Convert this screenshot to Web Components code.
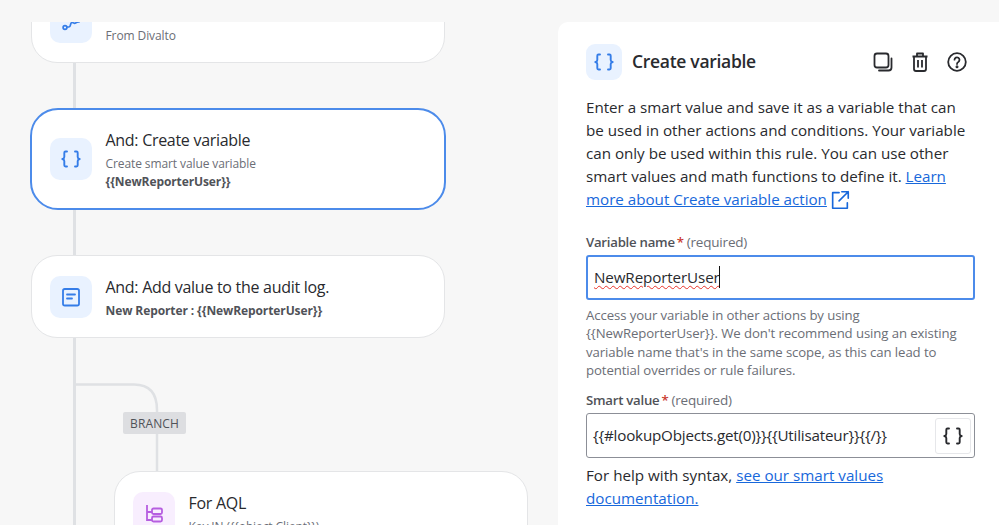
<!DOCTYPE html>
<html><head><meta charset="utf-8"><style>
html,body{margin:0;padding:0;width:999px;height:525px;overflow:hidden;background:#f7f8f9;font-family:"Open Sans","Noto Sans",sans-serif}
</style></head><body>
<rule-page>
  <rule-canvas slot="canvas">
    <flow-card style="--top:-42px;--h:83px;--pt:24px" tone="blue" desc="From Divalto" icon="branchy"></flow-card>
    <flow-card style="--top:45px;--h:102px;--mx:30px;--w:416px" selected heading="And: Create variable" desc="Create smart value variable" strong="{{NewReporterUser}}" tone="blue" icon="braces"></flow-card>
    <flow-card style="--top:45px;--h:83px" heading="And: Add value to the audit log." strong="New Reporter : {{NewReporterUser}}" tone="blue" icon="log"></flow-card>
    <flow-card style="--top:133px;--h:83px;--mx:114px" heading="For AQL" desc="Key IN ({{object.Client}})" tone="purple" icon="tree"></flow-card>
    <branch-tag>BRANCH</branch-tag>
  </rule-canvas>
  <config-panel slot="panel"></config-panel>
</rule-page>
<script>
const ICONS={
 braces:'<path d="M8 4.500H6.500c-.8 0-1.200.4-1.200 1.200V10c0 1-.6 1.700-2 2 1.400.3 2 1 2 2v4.300c0 .8.4 1.200 1.200 1.200H8M16 4.500h1.500c.8 0 1.200.4 1.200 1.200V10c0 1 .6 1.700 2 2-1.400.3-2 1-2 2v4.300c0 .8-.4 1.200-1.200 1.200H16" fill="none" stroke="currentColor" stroke-width="1.900" stroke-linecap="round" stroke-linejoin="round"/>',
 log:'<rect x="4" y="4" width="16" height="16.500" rx="1.800" fill="none" stroke="currentColor" stroke-width="1.800"/><path d="M8 9.500h8M8 13.500h5" stroke="currentColor" stroke-width="1.800" stroke-linecap="round"/>',
 tree:'<path d="M5 4v15h5M5 11h5" fill="none" stroke="currentColor" stroke-width="1.800"/><rect x="10" y="7.500" width="10" height="5.500" rx="1.500" fill="none" stroke="currentColor" stroke-width="1.800"/><rect x="10" y="15.500" width="10" height="5" rx="1.500" fill="none" stroke="currentColor" stroke-width="1.800"/>',
 branchy:'<circle cx="6" cy="17.500" r="1.900" fill="none" stroke="currentColor" stroke-width="1.700"/><path d="M8 17h2c2 0 1-4.500 3-4.500s2 1.500 3.500 .5 1.500-1 3.500-1" fill="none" stroke="currentColor" stroke-width="1.700" stroke-linecap="round"/>'
};
function def(name,css,html){customElements.define(name,class extends HTMLElement{connectedCallback(){if(this.shadowRoot)return;const s=this.attachShadow({mode:'open'});s.innerHTML='<style>'+css+'</style>'+(typeof html==='function'?html(this):html);}});}
def('rule-page',`:host{display:grid;grid-template-columns:558px 441px;padding-top:22px;height:503px;background:#f7f7f7}`,`<slot name="canvas"></slot><slot name="panel"></slot>`);
def('rule-canvas',`:host{display:flex;flex-direction:column;align-items:flex-start;height:503px;overflow:hidden;position:relative}
svg{position:absolute;left:0;top:0}`,`<svg width="558" height="503" fill="none" stroke="#dfe1e4"><path d="M74.500 30V503" stroke-width="3"/><path d="M76 362.500H134Q157 362.500 157 388V450" stroke-width="2.500"/></svg><slot></slot>`);
def('flow-card',`:host{display:flex;box-sizing:border-box;position:relative;width:var(--w,414px);height:var(--h);margin:var(--top) 0 0 var(--mx,31px);flex:none;background:#fff;border:1px solid #e4e5e7;border-radius:26px;align-items:center;padding-left:18px;gap:14px;color:#292a2e}
:host([selected]){border:2px solid #4c8bea;padding-left:18px;border-radius:28px}
.tile{width:42px;height:42px;border-radius:10px;flex:none;display:flex;align-items:center;justify-content:center}
.blue{background:#e9f2ff;color:#357de8}.purple{background:#f8eefe;color:#b65ee0}
svg{width:24px;height:24px;display:block}
.txt{padding-top:var(--pt,2px);margin-left:-.5px}
.h{font-size:16px;line-height:22px;letter-spacing:-.29px}
.d{font-size:12px;line-height:18px;color:#6b6e76;letter-spacing:-.1px}
.d.first{margin-top:4px}
b{display:block;font-size:12px;line-height:18px;color:#505258;font-weight:700;letter-spacing:-.1px}`,
el=>{const g=a=>el.getAttribute(a);return `<div class="tile ${g('tone')}"><svg viewBox="0 0 24 24">${ICONS[g('icon')]}</svg></div><div class="txt">${g('heading')?`<div class="h">${g('heading')}</div>`:''}${g('desc')?`<div class="d first">${g('desc')}</div>`:''}${g('strong')?`<b${g('desc')?'':' style="margin-top:4px"'}>${g('strong')}</b>`:''}</div>`});
def('branch-tag',`:host{position:absolute;left:123px;top:390px;width:63px;height:22px;background:#dddee1;border-radius:2px;color:#505258;font-size:12px;letter-spacing:.1px;display:flex;align-items:center;justify-content:center}`,`<slot></slot>`);
def('config-panel',`:host{display:block;box-sizing:border-box;height:503px;background:#fff;border-radius:10px 0 0 0;padding:21px 24px 0 28px;color:#292a2e;overflow:hidden;font-size:15.200px}
header{display:flex;align-items:center;height:37px}
.tile{width:36px;height:36px;border-radius:9px;background:#e9f2ff;color:#357de8;display:flex;align-items:center;justify-content:center;flex:none}
.tile svg{width:24px;height:24px}
h2{margin:-2px 0 0 10px;font-size:17.500px;font-weight:600;flex:1;letter-spacing:-.3px}
.acts{display:flex;gap:13px;margin-right:6px;color:#292a2e}
.acts svg{width:24px;height:24px;display:block}
p{margin:0;line-height:23px}
.intro{margin-top:16px;letter-spacing:-.02px}
a{color:#1868db;text-decoration:underline}
a svg{width:22px;height:22px;vertical-align:0;margin:-6px 0 -6px -2px}
label{display:block;font-size:13.200px;line-height:18px;font-weight:600;color:#505258;letter-spacing:-.25px}
label i{color:#c9372c;font-style:normal;margin-left:2px}
label span{font-size:13.500px;font-weight:400;color:#6b6e76;margin-left:3px;letter-spacing:-.2px}
.field{box-sizing:border-box;width:389px;height:45px;border-radius:3px;display:flex;align-items:center;font-size:15.200px;position:relative}
.f1{border:2px solid #4c8bea;padding:0 0 2px 6px;margin-top:4px}
.f2{border:1px solid #8c8f97;padding:0 3px 2px 6px;justify-content:space-between;margin-top:4px}
.sq{text-decoration:underline wavy #e8332a 1.300px;text-underline-offset:2px;letter-spacing:-.12px}
.caret{width:1.500px;height:22px;background:#111;margin-left:-1px}
.v{letter-spacing:-.2px}
.btn{width:36px;height:36px;box-sizing:border-box;border:1px solid #e6e7ea;border-radius:3px;display:flex;align-items:center;justify-content:center;color:#292a2e;background:#fff;margin-bottom:-2px}
.btn svg{width:24px;height:24px}
.help{margin-top:6px;font-size:13.200px;line-height:18.300px;color:#6b6e76;letter-spacing:-.1px}
.l1{margin-top:22px}.l2{margin-top:12px}
.foot{margin-top:6px}`,
`<header><div class="tile"><svg viewBox="0 0 24 24">${ICONS.braces}</svg></div><h2>Create variable</h2><div class="acts">
<svg viewBox="0 0 24 24" fill="none" stroke="currentColor" stroke-width="1.800" stroke-linejoin="round"><rect x="3.500" y="3.500" width="14" height="14" rx="2.500"/><path d="M20.500 8.500V17.500a3 3 0 0 1-3 3H8" stroke-linecap="round"/></svg>
<svg viewBox="0 0 24 24" fill="none" stroke="currentColor" stroke-width="1.800" stroke-linejoin="round"><path d="M4.500 6.500h15M9 6.500V3.500h6v3M6 6.500V19a2 2 0 0 0 2 2h8a2 2 0 0 0 2-2V6.500M10 10v7.500M14 10v7.500"/></svg>
<svg viewBox="0 0 24 24" fill="none" stroke="currentColor" stroke-width="1.800" stroke-linecap="round"><circle cx="12" cy="12" r="8.800"/><path d="M9.500 9.700A2.500 2.500 0 1 1 13.300 12c-.9.500-1.300 1-1.300 2"/><circle cx="12" cy="16.800" r=".6" fill="currentColor"/></svg>
</div></header>
<p class="intro">Enter a smart value and save it as a variable that can<br>be used in other actions and conditions. Your variable<br>can only be used within this rule. You can use other<br>smart values and math functions to define it. <a>Learn<br>more about Create variable action</a> <a style="text-decoration:none"><svg viewBox="0 0 24 24" fill="none" stroke="currentColor" stroke-width="1.800" stroke-linecap="round" stroke-linejoin="round"><path d="M11 4H4v17h16v-6M14 3h7v7M21 3l-10 10"/></svg></a></p>
<label class="l1">Variable name<i>*</i><span>(required)</span></label>
<div class="field f1"><span class="sq">NewReporterUser</span><span class="caret"></span></div>
<div class="help">Access your variable in other actions by using<br>{{NewReporterUser}}. We don't recommend using an existing<br>variable name that's in the same scope, as this can lead to<br>potential overrides or rule failures.</div>
<label class="l2">Smart value<i>*</i><span>(required)</span></label>
<div class="field f2"><span class="v">{{#lookupObjects.get(0)}}{{Utilisateur}}{{/}}</span><span class="btn"><svg viewBox="0 0 24 24">${ICONS.braces}</svg></span></div>
<p class="foot">For help with syntax, <a>see our smart values<br>documentation.</a></p>`);
</script>
</body></html>
